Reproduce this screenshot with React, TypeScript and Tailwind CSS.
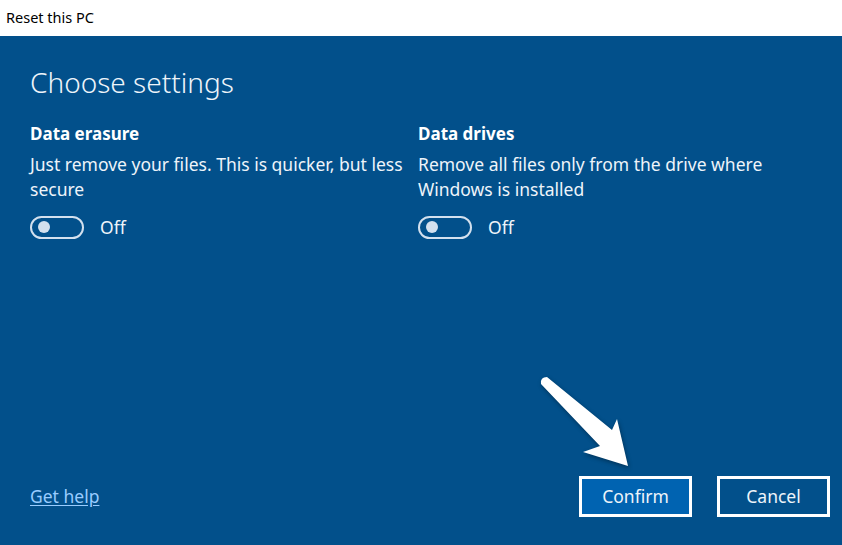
import React, { useState } from 'react';

const Toggle: React.FC<{ on: boolean; onClick: () => void }> = ({ on, onClick }) => (
  <button onClick={onClick} className="flex items-center gap-4">
    <span
      className={`flex h-[23px] w-[54px] items-center rounded-full border-2 border-[#d3e0ee] px-[6px] ${
        on ? 'justify-end bg-[#d3e0ee]' : 'justify-start'
      }`}
    >
      <span className={`h-[12px] w-[12px] rounded-full ${on ? 'bg-[#02508b]' : 'bg-[#d3e0ee]'}`} />
    </span>
    <span className="text-[17.5px] text-[#eef4fa]">{on ? 'On' : 'Off'}</span>
  </button>
);

const Setting: React.FC<{ title: string; text: string }> = ({ title, text }) => {
  const [on, setOn] = useState(false);
  return (
    <div className="flex w-[388px] flex-col">
      <h3 className="text-[17px] font-bold leading-[22px] text-white">{title}</h3>
      <p className="mt-[7px] text-[17.5px] leading-[25px] text-[#eef4fa]">{text}</p>
      <div className="mt-[12px]">
        <Toggle on={on} onClick={() => setOn(!on)} />
      </div>
    </div>
  );
};

const App: React.FC = () => {
  return (
    <div
      className="flex h-[545px] w-[842px] flex-col overflow-hidden"
      style={{ fontFamily: '"Noto Sans", "Open Sans", sans-serif' }}
    >
      <div className="flex h-[36px] items-center bg-white px-[6px] text-[14.5px] text-black">Reset this PC</div>

      <div className="relative flex flex-1 flex-col bg-[#02508b] px-[30px] pb-[28px]">
        <h1 className="mt-[28px] text-[28px] font-light leading-[36px] text-[#eef4fa]">Choose settings</h1>

        <div className="mt-[23px] flex">
          <Setting title="Data erasure" text="Just remove your files. This is quicker, but less secure" />
          <Setting title="Data drives" text="Remove all files only from the drive where Windows is installed" />
        </div>

        <div className="mt-auto flex items-center justify-between">
          <a href="#" className="text-[17.5px] text-[#99ccff] underline underline-offset-2">
            Get help
          </a>
          <div className="mr-[-18px] flex gap-[25px]">
            <button className="h-[41px] w-[113px] border-[3px] border-white bg-[#0063b1] text-[17.5px] text-[#eef4fa]">
              Confirm
            </button>
            <button className="h-[41px] w-[113px] border-[3px] border-white bg-[#02508b] text-[17.5px] text-[#eef4fa]">
              Cancel
            </button>
          </div>
        </div>

        <svg
          className="pointer-events-none absolute left-0 top-0 h-full w-full"
          viewBox="0 36 842 509"
          style={{ filter: 'drop-shadow(1px 2px 2px rgba(0,0,0,0.35))' }}
        >
          <path
            d="M541 384 Q540 377 547 377 L612 430 L617 419 L628 466 L583 452 L600 446 Z"
            fill="#ffffff"
          />
        </svg>
      </div>
    </div>
  );
};

export default App;
